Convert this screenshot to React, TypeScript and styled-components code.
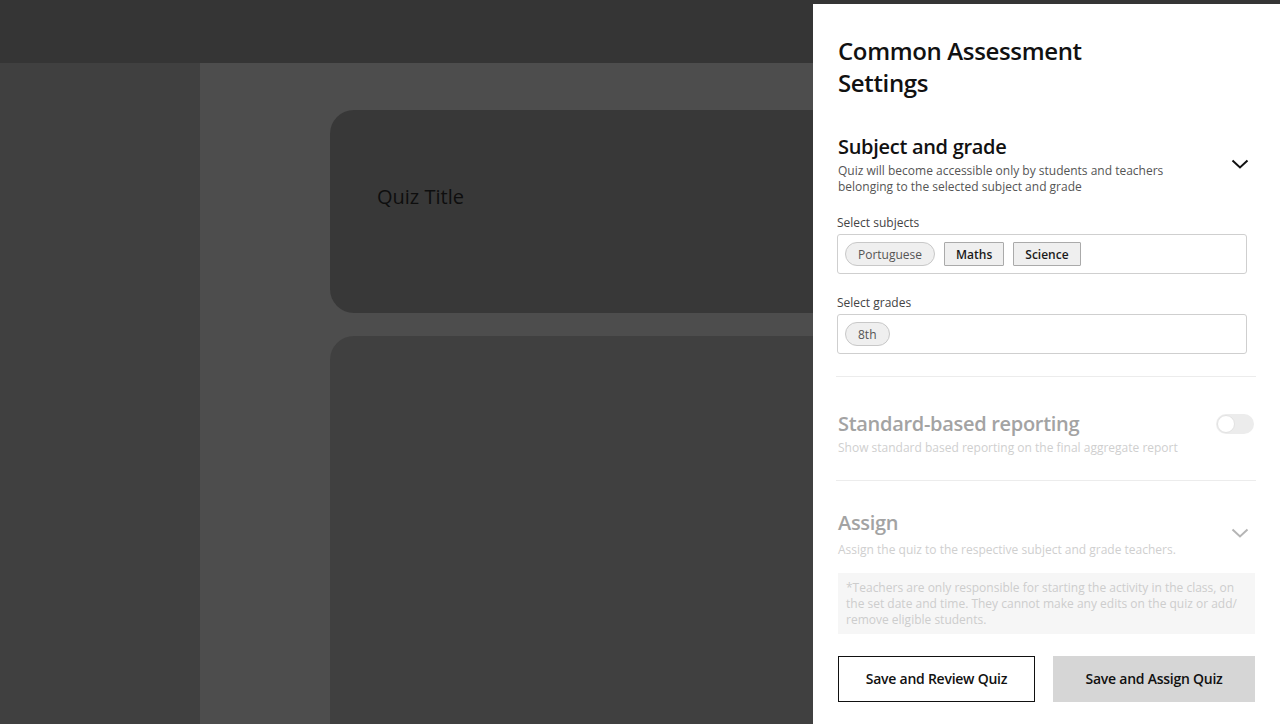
import styled, { createGlobalStyle } from "styled-components"

const GlobalStyle = createGlobalStyle`
	html, body {
		margin: 0;
		padding: 0;
		height: 100%;
		overflow: hidden;
	}

	body {
		font-family: "Open Sans", "Noto Sans", sans-serif;
		color: #111;
	}

	* {
		box-sizing: border-box;
	}
`

const Page = styled.div`
	position: relative;
	width: 1280px;
	height: 724px;

	display: flex;
	flex-direction: column;

	background-color: #404040;
`

const TopBar = styled.div`
	height: 63px;
	flex-shrink: 0;

	background-color: #353535;
`

const Body = styled.div`
	flex: 1;

	display: flex;
	min-height: 0;
`

const Sidebar = styled.div`
	width: 200px;
	flex-shrink: 0;

	background-color: #404040;
`

const Main = styled.div`
	flex: 1;
	padding: 47px 0 0 130px;

	display: flex;
	flex-direction: column;
	gap: 23px;

	background-color: #4d4d4d;
	overflow: hidden;
`

const Card = styled.div<{ $height?: number; $tone: string }>`
	width: 820px;
	height: ${({ $height }) => ($height ? `${$height}px` : "auto")};
	flex: ${({ $height }) => ($height ? "none" : "1")};
	padding: 74px 0 0 47px;

	background-color: ${({ $tone }) => $tone};
	border-radius: 24px;
	border-bottom-left-radius: ${({ $height }) => ($height ? "24px" : "0")};
`

const QuizTitle = styled.div`
	font-size: 20px;
	line-height: 26px;
	color: #0e0e0e;
`

const Drawer = styled.aside`
	position: absolute;
	top: 4px;
	right: 0;
	bottom: 0;
	width: 467px;
	padding: 31px 25px 0 25px;

	display: flex;
	flex-direction: column;

	background-color: #fff;
`

const DrawerTitle = styled.h1`
	margin: 0;
	max-width: 270px;

	font-size: 24px;
	font-weight: 600;
	letter-spacing: -0.35px;
	line-height: 32px;
	color: #111;
`

const SectionHead = styled.div<{ $top: number }>`
	margin-top: ${({ $top }) => $top}px;

	display: flex;
	align-items: flex-start;
	justify-content: space-between;
`

const HeadText = styled.div`
	max-width: 350px;

	display: flex;
	flex-direction: column;
`

const SectionTitle = styled.div<{ $muted?: boolean }>`
	font-size: 20px;
	font-weight: 600;
	letter-spacing: -0.3px;
	line-height: 26px;
	color: ${({ $muted }) => ($muted ? "#a3a3a3" : "#111")};
`

const SectionDesc = styled.div<{ $muted?: boolean; $gap: number }>`
	margin-top: ${({ $gap }) => $gap}px;

	font-size: 12px;
	line-height: 16px;
	color: ${({ $muted }) => ($muted ? "#cfcfcf" : "#555")};
`

const Chevron = styled.svg<{ $muted?: boolean; $top: number }>`
	margin: ${({ $top }) => $top}px 6px 0 0;
	flex-shrink: 0;

	color: ${({ $muted }) => ($muted ? "#b5b5b5" : "#111")};
`

const FieldLabel = styled.div<{ $top: number }>`
	margin: ${({ $top }) => $top}px 0 3px -1px;

	font-size: 12px;
	line-height: 16px;
	color: #444;
`

const SelectBox = styled.div`
	width: 410px;
	height: 40px;
	margin-left: -1px;
	padding: 0 7px;

	display: flex;
	align-items: center;
	gap: 7px;

	border: 1px solid #cfcfcf;
	border-radius: 3px;
`

const Chip = styled.span<{ $pill?: boolean }>`
	height: 24px;
	padding: 0 ${({ $pill }) => ($pill ? "12px" : "11px")};

	display: inline-flex;
	align-items: center;

	font-size: 12px;
	font-weight: ${({ $pill }) => ($pill ? 400 : 600)};
	color: ${({ $pill }) => ($pill ? "#555" : "#1a1a1a")};

	background-color: #efefef;
	border: 1px solid ${({ $pill }) => ($pill ? "#c8c8c8" : "#aaa")};
	border-radius: ${({ $pill }) => ($pill ? "12px" : "1px")};

	& + & {
		margin-left: ${({ $pill }) => ($pill ? "0" : "2px")};
	}
`

const Divider = styled.hr<{ $top: number }>`
	width: 420px;
	margin: ${({ $top }) => $top}px 0 0 -2px;

	border: none;
	border-top: 1px solid #ececec;
`

const Toggle = styled.div`
	position: relative;
	width: 38px;
	height: 20px;
	margin: 3px 1px 0 0;
	flex-shrink: 0;

	background-color: #ececec;
	border-radius: 10px;
`

const Knob = styled.span`
	position: absolute;
	top: 1px;
	left: 1px;
	width: 18px;
	height: 18px;

	background-color: #fff;
	border: 1px solid #e2e2e2;
	border-radius: 50%;
`

const Note = styled.div`
	margin-top: 15px;
	padding: 7px 8px 6px 8px;

	font-size: 12px;
	line-height: 16px;
	color: #cdcdcd;

	background-color: #f6f6f6;
`

const Actions = styled.div`
	margin-top: 22px;

	display: flex;
	justify-content: space-between;
`

const Button = styled.button<{ $primary?: boolean; $width: number }>`
	width: ${({ $width }) => $width}px;
	height: 46px;
	padding: 0 0 2px 0;

	font-family: inherit;
	font-size: 14px;
	font-weight: 600;
	letter-spacing: -0.25px;
	color: #111;

	background-color: ${({ $primary }) => ($primary ? "#d6d6d6" : "#fff")};
	border: ${({ $primary }) => ($primary ? "none" : "1px solid #111")};
	border-radius: 0;
	cursor: pointer;
`

const ChevronIcon = ({ muted, top }: { muted?: boolean; top: number }) => (
	<Chevron $muted={muted} $top={top} width="18" height="10" viewBox="0 0 18 10" fill="none">
		<polyline points="1.5,1.5 9,8.5 16.5,1.5" stroke="currentColor" strokeWidth="2" />
	</Chevron>
)

const App = () => {
	return (
		<>
			<GlobalStyle />
			<Page>
				<TopBar />
				<Body>
					<Sidebar />
					<Main>
						<Card $height={203} $tone="#383838">
							<QuizTitle>Quiz Title</QuizTitle>
						</Card>
						<Card $tone="#404040" />
					</Main>
				</Body>

				<Drawer>
					<DrawerTitle>Common Assessment Settings</DrawerTitle>

					<SectionHead $top={35}>
						<HeadText>
							<SectionTitle>Subject and grade</SectionTitle>
							<SectionDesc $gap={3}>
								Quiz will become accessible only by students and teachers belonging to the selected subject and grade
							</SectionDesc>
						</HeadText>
						<ChevronIcon top={25} />
					</SectionHead>

					<FieldLabel $top={20}>Select subjects</FieldLabel>
					<SelectBox>
						<Chip $pill>Portuguese</Chip>
						<Chip>Maths</Chip>
						<Chip>Science</Chip>
					</SelectBox>

					<FieldLabel $top={21}>Select grades</FieldLabel>
					<SelectBox>
						<Chip $pill>8th</Chip>
					</SelectBox>

					<Divider $top={22} />

					<SectionHead $top={34}>
						<HeadText>
							<SectionTitle $muted>Standard-based reporting</SectionTitle>
							<SectionDesc $muted $gap={3}>
								Show standard based reporting on the final aggregate report
							</SectionDesc>
						</HeadText>
						<Toggle>
							<Knob />
						</Toggle>
					</SectionHead>

					<Divider $top={24} />

					<SectionHead $top={29}>
						<HeadText>
							<SectionTitle $muted>Assign</SectionTitle>
							<SectionDesc $muted $gap={6}>
								Assign the quiz to the respective subject and grade teachers.
							</SectionDesc>
						</HeadText>
						<ChevronIcon muted top={18} />
					</SectionHead>

					<Note>
						*Teachers are only responsible for starting the activity in the class, on the set date and time. They cannot make any edits on the quiz or add/ remove eligible students.
					</Note>

					<Actions>
						<Button $width={197}>Save and Review Quiz</Button>
						<Button $primary $width={202}>Save and Assign Quiz</Button>
					</Actions>
				</Drawer>
			</Page>
		</>
	)
}

export default App
